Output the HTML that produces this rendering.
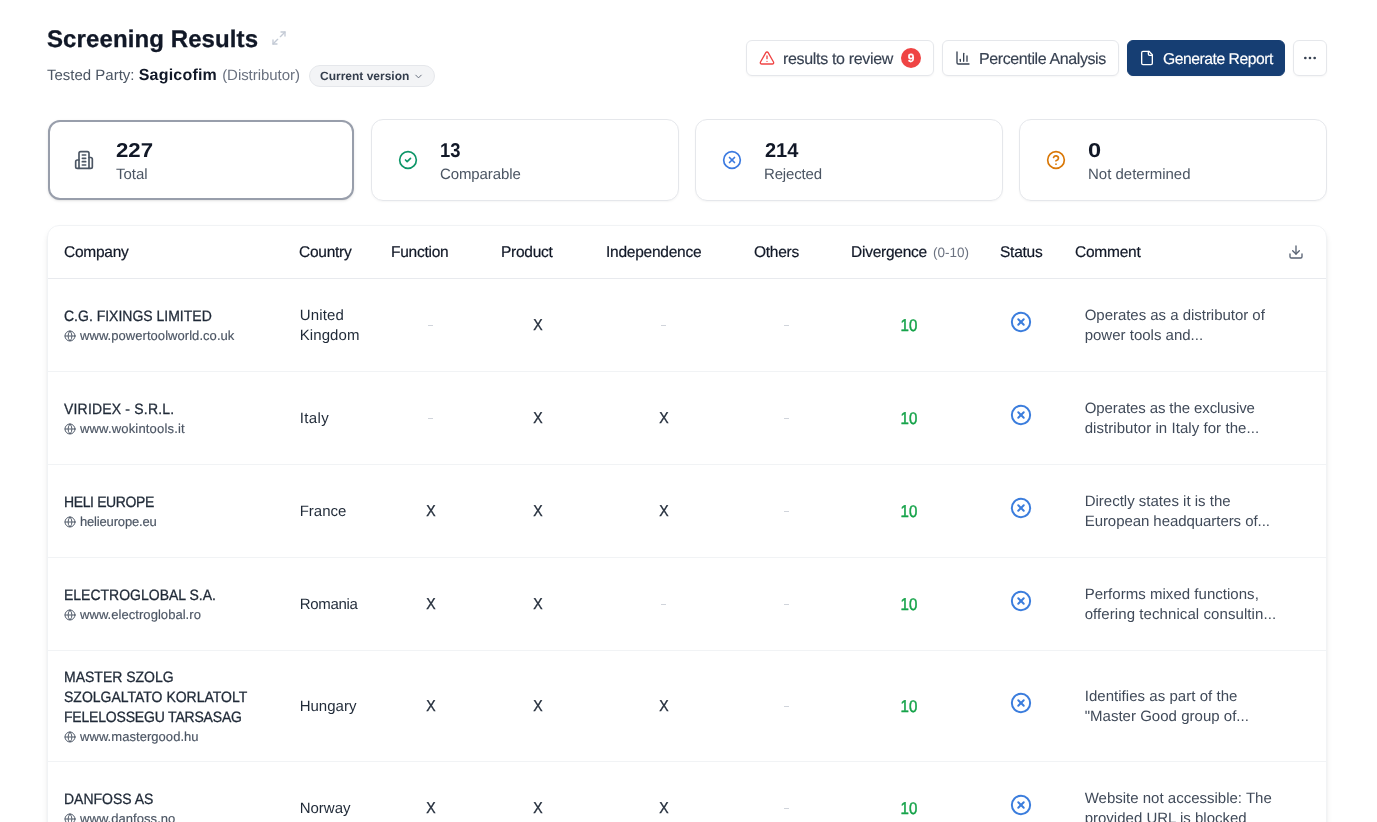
<!DOCTYPE html>
<html lang="en">
<head>
<meta charset="utf-8">
<title>Screening Results</title>
<style>
*{box-sizing:border-box;margin:0;padding:0}
html,body{width:1377px;height:822px;overflow:hidden;background:#fff}
#gs{position:absolute;left:0;top:0;width:1377px;height:822px;will-change:transform}
body{font-family:"Liberation Sans",sans-serif;color:#111827;position:relative;-webkit-font-smoothing:antialiased;text-rendering:geometricPrecision}
svg{display:block}
.abs{position:absolute}
.ico{fill:none;stroke:currentColor;stroke-width:2;stroke-linecap:round;stroke-linejoin:round}

/* header */
#title{left:47px;top:24px;font-size:24px;line-height:32px;font-weight:700;color:#111827;letter-spacing:.1px;-webkit-text-stroke:.3px #111827;white-space:nowrap}
#expand{left:271px;top:30px;color:#c3cad5}
#sub{left:47px;top:64.6px;height:22px;white-space:nowrap;font-size:15px;line-height:22px;color:#4b5563}
#sub b{font-size:16px;color:#111827;font-weight:700;letter-spacing:.2px}
#sub .role{color:#6b7280;margin-left:1px;letter-spacing:-.05px}
#ver{left:309px;top:65px;width:126px;height:22px;border:1px solid #e5e7eb;background:#f3f4f6;border-radius:12px;font-size:12px;font-weight:700;color:#333d4c;line-height:20px;padding-left:10px;white-space:nowrap}
#ver svg{position:absolute;left:103px;top:5px;color:#5b6474}

.btn{top:40px;height:36px;border:1px solid #e5e7eb;border-radius:6px;background:#fff;font-size:16px;line-height:34px;color:#374151;-webkit-text-stroke:.15px;white-space:nowrap;box-shadow:0 1px 2px rgba(0,0,0,.04)}
.btn span.t{position:absolute;top:2px}
.btn svg{position:absolute}
#b1{left:746px;width:188px}
#b2{left:942px;width:177px}
#b3{left:1127px;width:158px;background:#163e73;border-color:#163e73;color:#fff}
#b4{left:1293px;width:34px}
#badge{left:154px;top:7px;width:20px;height:20px;border-radius:10px;background:#ef4444;color:#fff;font-size:12px;font-weight:700;text-align:center;line-height:20px}

/* cards */
.card{top:119px;width:308px;height:82px;border:1px solid #e5e7eb;border-radius:12px;background:#fff;box-shadow:0 1px 2px rgba(0,0,0,.04)}
.card.sel{border:2px solid #989eab;box-shadow:0 1px 3px rgba(0,0,0,.1),0 1px 2px -1px rgba(0,0,0,.1);top:120px;height:80px;left:48px!important;width:306px}
.card .n{position:absolute;left:68px;top:17px;transform-origin:0 50%;font-size:20px;line-height:28px;font-weight:700;color:#111827}
.card .l{position:absolute;left:68px;top:45px;font-size:15px;line-height:20px;color:#4b5563}
.card svg{position:absolute;left:26px;top:30px}
.card.sel .n{left:66px;top:15px}.card.sel .l{left:66px;top:43px}.card.sel svg{left:24px;top:28px}

/* table */
#tbl{left:47px;top:225px;width:1280px;height:620px;border:1px solid #f1f3f5;border-radius:12px;background:#fff;box-shadow:0 4px 6px -1px rgba(0,0,0,.1),0 2px 4px -2px rgba(0,0,0,.1);overflow:hidden}
.row{position:relative;width:100%;border-bottom:1px solid #f1f3f5}
.hd{height:53px;border-bottom:1px solid #e8eaee;font-size:15.5px;letter-spacing:-.25px;font-weight:400;color:#111827}
.hd div{position:absolute;top:1px;line-height:52px;white-space:nowrap;-webkit-text-stroke:.2px #111827}
.r{height:93px}
.c{position:absolute;white-space:nowrap}
.nm{left:16px;font-size:15px;line-height:20px;color:#1f2937;-webkit-text-stroke:.3px #1f2937;letter-spacing:0;transform:scaleX(.933);transform-origin:0 0;text-rendering:geometricPrecision;margin-top:1px}
.nm span{display:inline-block;transform-origin:0 50%}
.url{left:16px;font-size:13px;line-height:16px;color:#4b5563;-webkit-text-stroke:.15px #4b5563;padding-left:16px;letter-spacing:.05px}
.url svg{position:absolute;left:0;top:2px;color:#525c6b;stroke-width:2}
.ct{margin-top:1px;left:251.7px;font-size:15px;line-height:20px;color:#1f2937}
.x{font-size:15.6px;line-height:20px;color:#1f2937;width:20px;text-align:center;-webkit-text-stroke:.35px #1f2937;transform:scaleX(.9);margin-top:.5px}
.d{width:5px;height:1px;background:#d0d4db}
.dv{left:841px;width:40px;text-align:center;font-size:17px;line-height:20px;color:#16a34a;-webkit-text-stroke:.45px #16a34a;transform:scaleX(.885)}
.st{left:962px;color:#3b7ddd}
.cm{margin-top:1px;left:1036.7px;font-size:15px;line-height:20px;color:#404a59;white-space:nowrap}
</style>
</head>
<body>
<div id="gs">
<!-- HEADER -->
<div id="title" class="abs">Screening Results</div>
<svg id="expand" class="abs ico" width="16" height="16" viewBox="0 0 24 24"><polyline points="15 3 21 3 21 9"/><polyline points="9 21 3 21 3 15"/><line x1="21" x2="14" y1="3" y2="10"/><line x1="3" x2="10" y1="21" y2="14"/></svg>
<div id="sub" class="abs">Tested Party: <b>Sagicofim</b> <span class="role">(Distributor)</span></div>
<div id="ver" class="abs">Current version<svg class="ico" width="11" height="11" viewBox="0 0 24 24"><path d="m6 9 6 6 6-6"/></svg></div>

<div id="b1" class="abs btn"><svg class="ico" style="left:12px;top:9px;color:#ef4444" width="16" height="16" viewBox="0 0 24 24"><path d="m21.73 18-8-14a2 2 0 0 0-3.48 0l-8 14A2 2 0 0 0 4 21h16a2 2 0 0 0 1.73-3"/><path d="M12 9v4"/><path d="M12 17h.01"/></svg><span class="t" style="left:36px;letter-spacing:-.33px">results to review</span><div id="badge" class="abs">9</div></div>
<div id="b2" class="abs btn"><svg class="ico" style="left:12px;top:9px" width="16" height="16" viewBox="0 0 24 24"><path d="M3 3v16a2 2 0 0 0 2 2h16"/><path d="M18 17V9"/><path d="M13 17V5"/><path d="M8 17v-3"/></svg><span class="t" style="left:36px;letter-spacing:-.39px">Percentile Analysis</span></div>
<div id="b3" class="abs btn"><svg class="ico" style="left:11px;top:9px" width="16" height="16" viewBox="0 0 24 24"><path d="M15 2H6a2 2 0 0 0-2 2v16a2 2 0 0 0 2 2h12a2 2 0 0 0 2-2V7Z"/><path d="M14 2v4a2 2 0 0 0 2 2h4"/></svg><span class="t" style="left:35px;font-size:15.7px;letter-spacing:-.47px">Generate Report</span></div>
<div id="b4" class="abs btn"><svg class="ico" style="left:8px;top:9px" width="16" height="16" viewBox="0 0 24 24"><circle cx="12" cy="12" r="1"/><circle cx="19" cy="12" r="1"/><circle cx="5" cy="12" r="1"/></svg></div>

<!-- CARDS -->
<div class="abs card sel" style="left:47px"><svg class="ico" style="color:#4b5563" width="20" height="20" viewBox="0 0 24 24"><path d="M6 22V4a2 2 0 0 1 2-2h8a2 2 0 0 1 2 2v18Z"/><path d="M6 12H4a2 2 0 0 0-2 2v6a2 2 0 0 0 2 2h2"/><path d="M18 9h2a2 2 0 0 1 2 2v9a2 2 0 0 1-2 2h-2"/><path d="M10 6h4"/><path d="M10 10h4"/><path d="M10 14h4"/><path d="M10 18h4"/></svg><div class="n" style="transform:scaleX(1.11)">227</div><div class="l">Total</div></div>
<div class="abs card" style="left:371px"><svg class="ico" style="color:#0d9668" width="20" height="20" viewBox="0 0 24 24"><circle cx="12" cy="12" r="10"/><path d="m9 12 2 2 4-4"/></svg><div class="n" style="transform:scaleX(.92)">13</div><div class="l" style="letter-spacing:-.1px">Comparable</div></div>
<div class="abs card" style="left:695px"><svg class="ico" style="color:#3b7ae0" width="20" height="20" viewBox="0 0 24 24"><circle cx="12" cy="12" r="10"/><path d="m15 9-6 6"/><path d="m9 9 6 6"/></svg><div class="n" style="left:69px">214</div><div class="l" style="letter-spacing:-.17px">Rejected</div></div>
<div class="abs card" style="left:1019px"><svg class="ico" style="color:#d97706" width="20" height="20" viewBox="0 0 24 24"><circle cx="12" cy="12" r="10"/><path d="M9.09 9a3 3 0 0 1 5.83 1c0 2-3 3-3 3"/><path d="M12 17h.01"/></svg><div class="n" style="transform:scaleX(1.18)">0</div><div class="l">Not determined</div></div>

<!-- TABLE -->
<div id="tbl" class="abs">
<div class="row hd">
<div style="left:16px">Company</div><div style="left:251px">Country</div><div style="left:343px">Function</div><div style="left:453px">Product</div><div style="left:558px">Independence</div><div style="left:706px">Others</div><div style="left:803px">Divergence <span style="color:#6b7280;-webkit-text-stroke:0;margin-left:2px;font-size:13.5px;letter-spacing:0">(0-10)</span></div><div style="left:952px">Status</div><div style="left:1027px">Comment</div>
<svg class="ico abs" style="left:1240px;top:18px;color:#586273" width="16" height="16" viewBox="0 0 24 24"><path d="M21 15v4a2 2 0 0 1-2 2H5a2 2 0 0 1-2-2v-4"/><polyline points="7 10 12 15 17 10"/><line x1="12" x2="12" y1="15" y2="3"/></svg>
</div>
<!--ROWS-->
<div class="row r" style="height:93px"><div class="c nm" style="top:27px">C.G. FIXINGS LIMITED</div><div class="c url" style="top:49px"><svg class="ico" width="12" height="12" viewBox="0 0 24 24"><circle cx="12" cy="12" r="10"/><path d="M12 2a14.5 14.5 0 0 0 0 20 14.5 14.5 0 0 0 0-20"/><path d="M2 12h20"/></svg>www.powertoolworld.co.uk</div><div class="c ct" style="top:26px"><span style="letter-spacing:0.15px">United</span><br><span style="letter-spacing:0.1px">Kingdom</span></div><div class="c d" style="left:380px;top:46px"></div><div class="c x" style="left:480px;top:36px">X</div><div class="c d" style="left:613px;top:46px"></div><div class="c d" style="left:736px;top:46px"></div><div class="c dv" style="top:37px">10</div><div class="c st" style="top:32px"><svg class="ico" style="stroke-width:2.15" width="22" height="22" viewBox="0 0 24 24"><circle cx="12" cy="12" r="10"/><path d="m15 9-6 6"/><path d="m9 9 6 6"/></svg></div><div class="c cm" style="top:26px"><span style="letter-spacing:-0.03px">Operates as a distributor of</span><br>power tools and...</div></div>
<div class="row r" style="height:93px"><div class="c nm" style="top:27px"><span style="letter-spacing:0.2px">VIRIDEX - S.R.L.</span></div><div class="c url" style="top:49px"><svg class="ico" width="12" height="12" viewBox="0 0 24 24"><circle cx="12" cy="12" r="10"/><path d="M12 2a14.5 14.5 0 0 0 0 20 14.5 14.5 0 0 0 0-20"/><path d="M2 12h20"/></svg><span style="letter-spacing:0.17px">www.wokintools.it</span></div><div class="c ct" style="top:36px"><span style="letter-spacing:0.4px">Italy</span></div><div class="c d" style="left:380px;top:46px"></div><div class="c x" style="left:480px;top:36px">X</div><div class="c x" style="left:606px;top:36px">X</div><div class="c d" style="left:736px;top:46px"></div><div class="c dv" style="top:37px">10</div><div class="c st" style="top:32px"><svg class="ico" style="stroke-width:2.15" width="22" height="22" viewBox="0 0 24 24"><circle cx="12" cy="12" r="10"/><path d="m15 9-6 6"/><path d="m9 9 6 6"/></svg></div><div class="c cm" style="top:26px"><span style="letter-spacing:-0.1px">Operates as the exclusive</span><br><span style="letter-spacing:0.06px">distributor in Italy for the...</span></div></div>
<div class="row r" style="height:93px"><div class="c nm" style="top:27px"><span style="letter-spacing:-0.4px">HELI EUROPE</span></div><div class="c url" style="top:49px"><svg class="ico" width="12" height="12" viewBox="0 0 24 24"><circle cx="12" cy="12" r="10"/><path d="M12 2a14.5 14.5 0 0 0 0 20 14.5 14.5 0 0 0 0-20"/><path d="M2 12h20"/></svg><span style="letter-spacing:-0.17px">helieurope.eu</span></div><div class="c ct" style="top:36px">France</div><div class="c x" style="left:373px;top:36px">X</div><div class="c x" style="left:480px;top:36px">X</div><div class="c x" style="left:606px;top:36px">X</div><div class="c d" style="left:736px;top:46px"></div><div class="c dv" style="top:37px">10</div><div class="c st" style="top:32px"><svg class="ico" style="stroke-width:2.15" width="22" height="22" viewBox="0 0 24 24"><circle cx="12" cy="12" r="10"/><path d="m15 9-6 6"/><path d="m9 9 6 6"/></svg></div><div class="c cm" style="top:26px">Directly states it is the<br><span style="letter-spacing:-0.06px">European headquarters of...</span></div></div>
<div class="row r" style="height:93px"><div class="c nm" style="top:27px">ELECTROGLOBAL S.A.</div><div class="c url" style="top:49px"><svg class="ico" width="12" height="12" viewBox="0 0 24 24"><circle cx="12" cy="12" r="10"/><path d="M12 2a14.5 14.5 0 0 0 0 20 14.5 14.5 0 0 0 0-20"/><path d="M2 12h20"/></svg>www.electroglobal.ro</div><div class="c ct" style="top:36px"><span style="letter-spacing:-0.3px">Romania</span></div><div class="c x" style="left:373px;top:36px">X</div><div class="c x" style="left:480px;top:36px">X</div><div class="c d" style="left:613px;top:46px"></div><div class="c d" style="left:736px;top:46px"></div><div class="c dv" style="top:37px">10</div><div class="c st" style="top:32px"><svg class="ico" style="stroke-width:2.15" width="22" height="22" viewBox="0 0 24 24"><circle cx="12" cy="12" r="10"/><path d="m15 9-6 6"/><path d="m9 9 6 6"/></svg></div><div class="c cm" style="top:26px"><span style="letter-spacing:0.03px">Performs mixed functions,</span><br><span style="letter-spacing:0.08px">offering technical consultin...</span></div></div>
<div class="row r" style="height:111px"><div class="c nm" style="top:16px">MASTER SZOLG<br>SZOLGALTATO KORLATOLT<br><span style="letter-spacing:-0.2px">FELELOSSEGU TARSASAG</span></div><div class="c url" style="top:78px"><svg class="ico" width="12" height="12" viewBox="0 0 24 24"><circle cx="12" cy="12" r="10"/><path d="M12 2a14.5 14.5 0 0 0 0 20 14.5 14.5 0 0 0 0-20"/><path d="M2 12h20"/></svg>www.mastergood.hu</div><div class="c ct" style="top:45px">Hungary</div><div class="c x" style="left:373px;top:45px">X</div><div class="c x" style="left:480px;top:45px">X</div><div class="c x" style="left:606px;top:45px">X</div><div class="c d" style="left:736px;top:55px"></div><div class="c dv" style="top:46px">10</div><div class="c st" style="top:41px"><svg class="ico" style="stroke-width:2.15" width="22" height="22" viewBox="0 0 24 24"><circle cx="12" cy="12" r="10"/><path d="m15 9-6 6"/><path d="m9 9 6 6"/></svg></div><div class="c cm" style="top:35px"><span style="letter-spacing:0.04px">Identifies as part of the</span><br><span style="letter-spacing:0.02px">&quot;Master Good group of...</span></div></div>
<div class="row r" style="height:93px"><div class="c nm" style="top:27px">DANFOSS AS</div><div class="c url" style="top:49px"><svg class="ico" width="12" height="12" viewBox="0 0 24 24"><circle cx="12" cy="12" r="10"/><path d="M12 2a14.5 14.5 0 0 0 0 20 14.5 14.5 0 0 0 0-20"/><path d="M2 12h20"/></svg>www.danfoss.no</div><div class="c ct" style="top:36px">Norway</div><div class="c x" style="left:373px;top:36px">X</div><div class="c x" style="left:480px;top:36px">X</div><div class="c x" style="left:606px;top:36px">X</div><div class="c d" style="left:736px;top:46px"></div><div class="c dv" style="top:37px">10</div><div class="c st" style="top:32px"><svg class="ico" style="stroke-width:2.15" width="22" height="22" viewBox="0 0 24 24"><circle cx="12" cy="12" r="10"/><path d="m15 9-6 6"/><path d="m9 9 6 6"/></svg></div><div class="c cm" style="top:26px">Website not accessible: The<br>provided URL is blocked</div></div>
<!--/ROWS-->
</div>
</div>
</body>
</html>
